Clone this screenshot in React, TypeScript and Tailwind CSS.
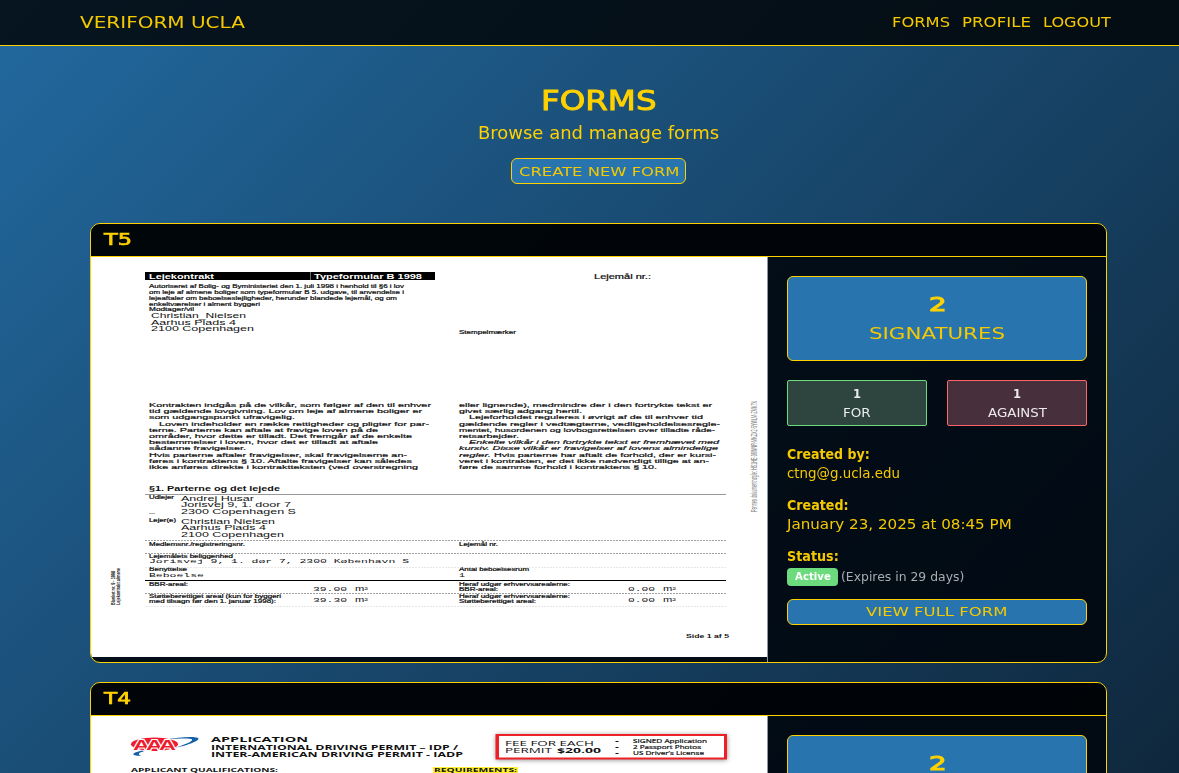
import { useLayoutEffect, useRef, useState } from "react";
import type { ReactNode } from "react";

type FitProps = { w: number; text: string; className?: string };

// Stretches a line of text horizontally so that it fills the given width.
function Fit({ w, text, className = "" }: FitProps) {
  const ref = useRef<HTMLSpanElement>(null);
  const [scale, setScale] = useState(1);
  useLayoutEffect(() => {
    if (ref.current) setScale(w / ref.current.offsetWidth);
  }, [w, text]);
  return (
    <span className={`inline-block whitespace-nowrap text-left ${className}`} style={{ width: w }}>
      <span ref={ref} className="inline-block origin-left" style={{ transform: `scaleX(${scale})` }}>
        {text}
      </span>
    </span>
  );
}

type Line = [x: number, baseline: number, width: number, text: string];

function Lines({ rows, size, bold, italic, mono }: { rows: Line[]; size: number; bold?: boolean; italic?: boolean; mono?: boolean }) {
  return (
    <g
      fontFamily={mono ? '"Liberation Mono", monospace' : '"Liberation Sans", sans-serif'}
      fontSize={size}
      fontWeight={bold ? 700 : 400}
      fontStyle={italic ? "italic" : "normal"}
    >
      {rows.map(([x, y, w, t]) => (
        <text key={`${x}-${y}`} x={x} y={y} textLength={w} lengthAdjust="spacingAndGlyphs">
          {t}
        </text>
      ))}
    </g>
  );
}

function LeasePreview() {
  return (
    <svg width="676" height="400" viewBox="91 257 676 400" className="block bg-white" fill="#111">
      <rect x="145" y="272" width="290" height="8" fill="#000" />
      <rect x="310" y="272" width="0.7" height="8" fill="#999" />
      <g fill="#fff">
        <Lines bold size={6.4} rows={[[149, 278.5, 65, "Lejekontrakt"], [314, 278.5, 108, "Typeformular B 1998"]]} />
      </g>
      <g stroke="#111" strokeWidth="0.2">
        <Lines size={6.4} rows={[[594, 278.5, 57, "Lejemål nr.:"]]} />
        <Lines
          size={5}
          rows={[
            [149, 287.5, 255, "Autoriseret af Bolig- og Byministeriet den 1. juli 1998 i henhold til §6 i lov"],
            [149, 293.9, 255, "om leje af almene boliger som typeformular B 5. udgave, til anvendelse i"],
            [149, 299.9, 248, "lejeaftaler om beboelseslejligheder, herunder blandede lejemål, og om"],
            [149, 305.5, 111, "enkeltværelser i alment byggeri"],
            [149, 310.5, 45, "Modtager/vil"],
            [459, 333.5, 57, "Stempelmærker"],
          ]}
        />
        <Lines
          size={6.2}
          rows={[
            [149, 407, 282, "Kontrakten indgås på de vilkår, som følger af den til enhver"],
            [149, 413.2, 273, "tid gældende lovgivning. Lov om leje af almene boliger er"],
            [149, 419.4, 146, "som udgangspunkt ufravigelig."],
            [159, 425.6, 270, "Loven indeholder en række rettigheder og pligter for par-"],
            [149, 431.8, 229, "terne. Parterne kan aftale at fravige loven på de"],
            [149, 438, 263, "områder, hvor dette er tilladt. Det fremgår af de enkelte"],
            [149, 444.2, 229, "bestemmelser i loven, hvor det er tilladt at aftale"],
            [149, 450.4, 97, "sådanne fravigelser."],
            [149, 456.6, 258, "Hvis parterne aftaler fravigelser, skal fravigelserne an-"],
            [149, 462.8, 263, "føres i kontraktens § 10. Aftalte fravigelser kan således"],
            [149, 468.8, 269, "ikke anføres direkte i kontraktteksten (ved overstregning"],
            [459, 407, 253, "eller lignende), medmindre der i den fortrykte tekst er"],
            [459, 413.2, 123, "givet særlig adgang hertil."],
            [469, 419.4, 234, "Lejeforholdet reguleres i øvrigt af de til enhver tid"],
            [459, 425.6, 261, "gældende regler i vedtægterne, vedligeholdelsesregle-"],
            [459, 431.8, 256, "mentet, husordenen og lovbogsrettelsen over tilladte råde-"],
            [459, 438, 60, "retsarbejder."],
            [494, 456.6, 222, "Hvis parterne har aftalt de forhold, der er kursi-"],
            [459, 462.8, 250, "veret i kontrakten, er det ikke nødvendigt tillige at an-"],
            [459, 468.8, 198, "føre de samme forhold i kontraktens § 10."],
          ]}
        />
        <Lines
          italic
          size={6.2}
          rows={[
            [469, 444.2, 250, "Enkelte vilkår i den fortrykte tekst er fremhævet med"],
            [459, 450.4, 259, "kursiv. Disse vilkår er fravigelser af lovens almindelige"],
            [459, 456.6, 32, "regler."],
          ]}
        />
        <Lines
          size={4.5}
          rows={[
            [149, 498.5, 25, "Udlejer"],
            [149, 521.5, 27, "Lejer(e)"],
            [149, 545.5, 96, "Medlemsnr./registreringsnr."],
            [459, 545.5, 39, "Lejemål nr."],
            [149, 558, 84, "Lejemålets beliggenhed"],
            [149, 571.3, 38, "Benyttelse"],
            [459, 571.3, 70, "Antal beboelsesrum"],
            [149, 585.5, 39, "BBR-areal:"],
            [459, 585.5, 111, "Heraf udgør erhvervsarealerne:"],
            [459, 590.5, 39, "BBR-areal:"],
            [149, 598.3, 132, "Støtteberettiget areal (kun for byggeri"],
            [149, 603.2, 127, "med tilsagn før den 1. januar 1998):"],
            [459, 598.3, 111, "Heraf udgør erhvervsarealerne:"],
            [459, 603.2, 77, "Støtteberettiget areal:"],
          ]}
        />
      </g>
      <Lines
        size={6.3}
        rows={[
          [151, 318.3, 95, "Christian_Nielsen"],
          [151, 324.7, 85, "Aarhus Plads 4"],
          [151, 330.9, 103, "2100 Copenhagen"],
          [181, 501, 73, "Andrej Husar"],
          [181, 507.3, 110, "Jorisvej 9, 1. door 7"],
          [181, 513.6, 115, "2300 Copenhagen S"],
          [181, 524, 94, "Christian Nielsen"],
          [181, 530.2, 85, "Aarhus Plads 4"],
          [181, 536.6, 103, "2100 Copenhagen"],
        ]}
      />
      <Lines bold size={6.4} rows={[[149, 491.3, 131, "§1. Parterne og det lejede"]]} />
      <rect x="145" y="494" width="581" height="1" fill="#999" />
      <Lines
        mono
        size={6.2}
        rows={[
          [149, 563, 260, "Jorisvej 9, 1. dør 7, 2300 København S"],
          [149, 576.7, 55, "Beboelse"],
          [459, 576.7, 6, "1"],
          [313, 591, 34, "39.00"],
          [313, 601.5, 34, "39.30"],
          [628, 591, 27, "0.00"],
          [628, 601.5, 27, "0.00"],
        ]}
      />
      <Lines
        size={6.6}
        rows={[
          [355, 591, 13, "m²"],
          [355, 601.5, 13, "m²"],
          [663, 591, 13, "m²"],
          [663, 601.5, 13, "m²"],
        ]}
      />
      <rect x="149" y="513" width="6" height="0.6" fill="#777" />
      <g stroke="#777" strokeWidth="0.7" strokeDasharray="2 1">
        <path d="M145 540.5H726M145 553.5H726M145 593.5H726" />
        <path d="M145 567.5H726M145 606.5H726" stroke="#ddd" />
      </g>
      <rect x="145" y="580" width="581" height="1" fill="#000" />
      <Lines bold size={5.6} rows={[[686, 638.3, 43, "Side 1 af 5"]]} />
      <g fontFamily='"Liberation Sans", sans-serif'>
        <text transform="translate(756.5 512) rotate(-90)" fontSize="8.5" fill="#777" textLength="111" lengthAdjust="spacingAndGlyphs">
          Penneo dokumentnøgle: HS1HE-08WNR-MKZX2-5YWLM-ZMK7X
        </text>
        <text transform="translate(115 605) rotate(-90)" fontSize="4.8" fontWeight="700" textLength="34" lengthAdjust="spacingAndGlyphs">
          Blanket nr. 9 - 1998
        </text>
        <text transform="translate(120 605) rotate(-90)" fontSize="4.8" fontWeight="700" textLength="37" lengthAdjust="spacingAndGlyphs">
          Lejekontrakt almene
        </text>
      </g>
    </svg>
  );
}

function PermitPreview() {
  return (
    <svg width="676" height="400" viewBox="91 716 676 400" className="block bg-white" fill="#111">
      <defs>
        <filter id="soft" x="-5%" y="-30%" width="110%" height="160%">
          <feGaussianBlur stdDeviation="2.5" />
        </filter>
      </defs>
      <path d="M166 739.5C180 736.5 198 736 198.5 738.5C199 741 186 746 174 748C188 743.5 193 741 192 739.2C190 738 178 738.5 166 739.5Z" fill="#1261a8" />
      <path d="M142 750.5C131 753 130 756 142 755.8C138 755 137 753 144 751.2Z" fill="#1261a8" />
      <ellipse cx="154.5" cy="744.2" rx="23.5" ry="6.8" fill="#ed1c2e" />
      <g fontFamily='"Liberation Sans", sans-serif' fontWeight="700" fontSize="15" fill="#ed1c2e" stroke="#fff" strokeWidth="1.8" paintOrder="stroke">
        <text x="133" y="749.8" textLength="17" lengthAdjust="spacingAndGlyphs">A</text>
        <text x="146" y="749.8" textLength="17" lengthAdjust="spacingAndGlyphs">A</text>
        <text x="159" y="749.8" textLength="17" lengthAdjust="spacingAndGlyphs">A</text>
      </g>
      <g fontFamily='"Open Sans", sans-serif' fontWeight="700">
        <text x="211" y="742" fontSize="7.6" textLength="97" lengthAdjust="spacingAndGlyphs">APPLICATION</text>
        <text x="211" y="749.8" fontSize="6.2" textLength="247" lengthAdjust="spacingAndGlyphs">INTERNATIONAL DRIVING PERMIT – IDP /</text>
        <text x="211" y="757.3" fontSize="6.2" textLength="252" lengthAdjust="spacingAndGlyphs">INTER-AMERICAN DRIVING PERMIT - IADP</text>
        <text x="131" y="771.6" fontSize="6" textLength="147" lengthAdjust="spacingAndGlyphs">APPLICANT QUALIFICATIONS:</text>
        <rect x="433" y="767" width="85" height="6" fill="#fff12d" />
        <text x="434" y="771.6" fontSize="6" textLength="83" lengthAdjust="spacingAndGlyphs">REQUIREMENTS:</text>
      </g>
      <rect x="496" y="735" width="231" height="25" fill="#888" filter="url(#soft)" />
      <rect x="495.5" y="734" width="231.5" height="25.5" fill="#ed2027" />
      <rect x="499" y="736" width="225" height="21.5" fill="#fff" />
      <g fontFamily='"Open Sans", sans-serif'>
        <text x="505" y="746" fontSize="6.8" textLength="89" lengthAdjust="spacingAndGlyphs">FEE FOR EACH</text>
        <text x="505" y="753.3" fontSize="6.8" textLength="47" lengthAdjust="spacingAndGlyphs">PERMIT</text>
        <text x="557" y="753.3" fontSize="6.8" fontWeight="700" textLength="44" lengthAdjust="spacingAndGlyphs">$20.00</text>
        <g stroke="#111" strokeWidth="0.2">
          <text x="633" y="743.4" fontSize="5.4" textLength="74" lengthAdjust="spacingAndGlyphs">SIGNED Application</text>
          <text x="633" y="749.4" fontSize="5.4" textLength="68" lengthAdjust="spacingAndGlyphs">2 Passport Photos</text>
          <text x="633" y="755.4" fontSize="5.4" textLength="71" lengthAdjust="spacingAndGlyphs">US Driver’s License</text>
        </g>
      </g>
      <path d="M615.5 741.5H618.5M615.5 747.5H618.5M615.5 753.5H618.5" stroke="#111" />
    </svg>
  );
}

function Vote({ label, w, className }: { label: string; w: number; className: string }) {
  return (
    <div className={`flex h-[46px] flex-1 flex-col items-center rounded-[2px] border pt-1 text-white/90 ${className}`}>
      <Fit w={8} text="1" className="h-[18px] text-[13px] font-bold leading-[18px]" />
      <Fit w={w} text={label} className="mt-[2px] h-[17px] text-[12px] leading-[17px]" />
    </div>
  );
}

function FormCard({ title, titleWidth, preview }: { title: string; titleWidth: number; preview: ReactNode }) {
  return (
    <article className="overflow-hidden rounded-[10px] border border-[#ffd100] bg-[#00060c]/88">
      <header className="flex h-[33px] items-center border-b border-[#ffd100] bg-black/60 pl-[13px] text-[#ffd100]">
        <Fit w={titleWidth} text={title} className="h-5 text-[16px] leading-5 [-webkit-text-stroke:0.7px_#ffd100]" />
      </header>
      <div className="flex h-[405px]">
        <div className="w-[677px] shrink-0 border-r border-[#8b97a5]">{preview}</div>
        <div className="flex-1 px-[19px] pt-[19px]">
          <div className="flex h-[85px] flex-col items-center rounded-md border border-[#ffd100] bg-[#2774ae] pt-[14px]">
            <Fit w={17} text="2" className="h-[26px] text-[19.5px] leading-[28px] text-[#ffd100] [-webkit-text-stroke:1.1px_#ffd100]" />
            <Fit w={136} text="SIGNATURES" className="mt-[5px] h-6 text-[16.5px] leading-6" />
          </div>
          <div className="mt-[19px] flex gap-5">
            <Vote label="FOR" w={28} className="border-[#6bdb7e] bg-[#2d443f]" />
            <Vote label="AGAINST" w={59} className="border-[#ff6467] bg-[#482f3c]" />
          </div>
          <dl className="mt-[19px] text-[13.5px] leading-[19px]">
            <dt className="h-[19px] font-bold"><Fit w={83} text="Created by:" /></dt>
            <dd className="h-[19px]"><Fit w={113} text="ctng@g.ucla.edu" /></dd>
            <dt className="mt-[13px] h-[19px] font-bold"><Fit w={62} text="Created:" /></dt>
            <dd className="h-[19px]"><Fit w={225} text="January 23, 2025 at 08:45 PM" /></dd>
            <dt className="mt-[13px] h-[19px] font-bold"><Fit w={52} text="Status:" /></dt>
            <dd className="mt-[2px] flex h-[18px] items-center gap-[3px]">
              <span className="flex h-[18px] w-[51px] items-center justify-center rounded bg-[#6bdb7e] text-white">
                <Fit w={36} text="Active" className="h-[18px] text-[10.5px] font-bold leading-[17px]" />
              </span>
              <Fit w={123} text="(Expires in 29 days)" className="h-[17px] text-[12px] leading-[17px] text-[#a9adb1]" />
            </dd>
          </dl>
          <button className="mt-[13px] flex h-[26px] w-full items-center justify-center rounded-md border border-[#ffd100] bg-[#2774ae]">
            <Fit w={142} text="VIEW FULL FORM" className="h-[22px] text-[13px] leading-[22px]" />
          </button>
        </div>
      </div>
    </article>
  );
}

export default function App() {
  return (
    <div className="h-[773px] overflow-hidden bg-[linear-gradient(135deg,#22699f_0%,#0f273c_100%)] font-['DejaVu_Sans',sans-serif] text-[#f5c900]">
      <nav className="flex h-[46px] items-center justify-between border-b border-[#ffd100] bg-black/80 pl-20 pr-[68px]">
        <Fit w={165} text="VERIFORM UCLA" className="h-6 text-[16.5px] leading-6" />
        <div className="flex gap-3 text-[13.5px] leading-[23px]">
          <Fit w={58} text="FORMS" className="h-6" />
          <Fit w={69} text="PROFILE" className="h-6" />
          <Fit w={68} text="LOGOUT" className="h-6" />
        </div>
      </nav>
      <main className="ml-[90px] w-[1017px]">
        <section className="flex flex-col items-center pt-[37px]">
          <h1 className="h-8 text-[26px] leading-[36px] text-[#ffd100]">
            <Fit w={115} text="FORMS" className="[-webkit-text-stroke:0.9px_#ffd100]" />
          </h1>
          <p className="mt-[6px] h-6 text-[17px] leading-[25px] text-[#ffd100]"><Fit w={241} text="Browse and manage forms" /></p>
          <button className="mt-[13px] flex h-[26px] w-[175px] items-center justify-center rounded-md border border-[#ffd100] bg-[#2774ae]">
            <Fit w={160} text="CREATE NEW FORM" className="h-[22px] text-[13px] leading-[23px]" />
          </button>
        </section>
        <section className="mt-[39px] flex flex-col gap-[19px]">
          <FormCard title="T5" titleWidth={28} preview={<LeasePreview />} />
          <FormCard title="T4" titleWidth={27} preview={<PermitPreview />} />
        </section>
      </main>
    </div>
  );
}
